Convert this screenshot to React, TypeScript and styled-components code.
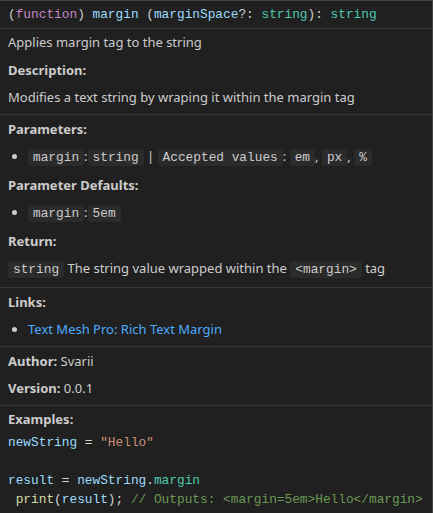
import React from "react";
import styled, { createGlobalStyle } from "styled-components";

const Global = createGlobalStyle`
  html, body { margin: 0; padding: 0; background: #202020; overflow: hidden; }
  * { box-sizing: border-box; }
`;

const MONO = `"Liberation Mono", "DejaVu Sans Mono", monospace`;
const SANS = `"Noto Sans", "Open Sans", sans-serif`;

const Widget = styled.div`
  width: 433px;
  height: 513px;
  background: #202020;
  border-top: 1px solid #454545;
  border-right: 1px solid #454545;
  color: #cccccc;
  font-family: ${SANS};
  font-size: 13px;
  line-height: 19.5px;
  overflow: hidden;
`;

const Header = styled.div`
  padding: 4px 8px;
`;

const Section = styled.div<{ $pt?: number; $pb?: number }>`
  padding: ${(p) => p.$pt ?? 5}px 8px ${(p) => p.$pb ?? 6}px;
  border-top: 1px solid #363636;
`;

const Signature = styled.div`
  font-family: ${MONO};
  font-size: 12.8px;
  line-height: 19px;
  white-space: pre;
  color: #cccccc;
`;

const Tok = styled.span<{ $c: string }>`
  color: ${(p) => p.$c};
`;

const P = styled.p<{ $gap?: number }>`
  margin: ${(p) => (p.$gap ?? 8)}px 0;
  &:first-child { margin-top: 0; }
  &:last-child { margin-bottom: 0; }
`;

const Label = styled.strong`
  font-weight: 700;
  color: #cccccc;
`;

const List = styled.ul`
  margin: 8px 0;
  padding-left: 20px;
  &:last-child { margin-bottom: 0; }
`;

const Code = styled.code`
  font-family: ${MONO};
  font-size: 12.8px;
  background: #2b2b2b;
  border-radius: 3px;
  padding: 1px 5px;
  color: #cccccc;
`;

const Link = styled.a`
  color: #4daafc;
  text-decoration: none;
`;

const CodeBlock = styled.pre`
  margin: 0;
  font-family: ${MONO};
  font-size: 12.8px;
  line-height: 19px;
  white-space: pre;
  color: #d4d4d4;
`;

const C = {
  punct: "#cccccc",
  kw: "#c586c0",
  id: "#9cdcfe",
  type: "#4ec9b0",
  str: "#ce9178",
  fn: "#dcdcaa",
  comment: "#6a9955",
  op: "#d4d4d4",
};

export default function App() {
  return (
    <>
      <Global />
      <Widget>
        <Header>
          <Signature>
            <Tok $c={C.punct}>(</Tok>
            <Tok $c={C.kw}>function</Tok>
            <Tok $c={C.punct}>) </Tok>
            <Tok $c={C.id}>margin</Tok>
            <Tok $c={C.punct}> (</Tok>
            <Tok $c={C.id}>marginSpace</Tok>
            <Tok $c={C.punct}>?: </Tok>
            <Tok $c={C.type}>string</Tok>
            <Tok $c={C.punct}>): </Tok>
            <Tok $c={C.type}>string</Tok>
          </Signature>
        </Header>
        <Section $pt={4} $pb={6}>
          <P>Applies margin tag to the string</P>
          <P>
            <Label>Description:</Label>
          </P>
          <P>Modifies a text string by wraping it within the margin tag</P>
        </Section>
        <Section $pb={7}>
          <P>
            <Label>Parameters:</Label>
          </P>
          <List>
            <li>
              <Code>margin</Code>:<Code>string</Code> | <Code>Accepted values</Code>:{" "}
              <Code>em</Code>, <Code>px</Code>, <Code>%</Code>
            </li>
          </List>
          <P>
            <Label>Parameter Defaults:</Label>
          </P>
          <List>
            <li>
              <Code>margin</Code>:<Code>5em</Code>
            </li>
          </List>
          <P>
            <Label>Return:</Label>
          </P>
          <P>
            <Code>string</Code> The string value wrapped within the <Code>&lt;margin&gt;</Code> tag
          </P>
        </Section>
        <Section>
          <P>
            <Label>Links:</Label>
          </P>
          <List>
            <li>
              <Link href="#">Text Mesh Pro: Rich Text Margin</Link>
            </li>
          </List>
        </Section>
        <Section>
          <P>
            <Label>Author:</Label> Svarii
          </P>
          <P>
            <Label>Version:</Label> 0.0.1
          </P>
        </Section>
        <Section $pt={4}>
          <P $gap={4}>
            <Label>Examples:</Label>
          </P>
          <CodeBlock>
            <Tok $c={C.id}>newString</Tok>
            <Tok $c={C.op}> = </Tok>
            <Tok $c={C.str}>"Hello"</Tok>
            {"\n\n"}
            <Tok $c={C.id}>result</Tok>
            <Tok $c={C.op}> = </Tok>
            <Tok $c={C.id}>newString</Tok>
            <Tok $c={C.op}>.</Tok>
            <Tok $c={C.type}>margin</Tok>
            {"\n "}
            <Tok $c={C.fn}>print</Tok>
            <Tok $c={C.op}>(</Tok>
            <Tok $c={C.id}>result</Tok>
            <Tok $c={C.op}>); </Tok>
            <Tok $c={C.comment}>// Outputs: &lt;margin=5em&gt;Hello&lt;/margin&gt;</Tok>
          </CodeBlock>
        </Section>
      </Widget>
    </>
  );
}
